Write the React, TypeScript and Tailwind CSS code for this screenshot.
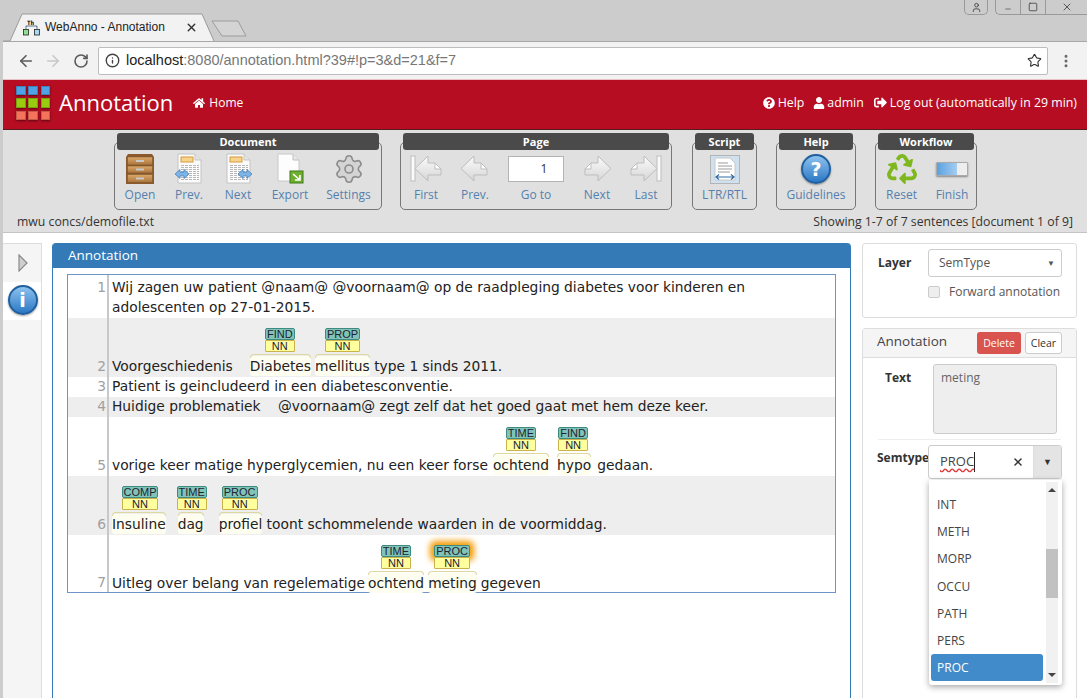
import { ArrowLeft, ArrowRight, RotateCw, Info, Star, EllipsisVertical, Settings, X, User, Minus, Square } from 'lucide-react'
import { FaHome, FaQuestionCircle, FaUser, FaSignOutAlt, FaRecycle } from 'react-icons/fa'

const annFont = { fontFamily: '"DejaVu Sans", sans-serif' }

function TabStrip() {
  return (
    <div className="relative h-[41px] bg-[#cccccc]">
      <svg className="absolute left-0 top-0" width="260" height="42" viewBox="0 0 260 42">
        <path d="M3 41 L10 41 L22 14 H202 L214 41" fill="#f2f2f2" stroke="#9a9a9a" />
        <path d="M212 21 L214 21 H238 L246 36 H222 Z" fill="#d4d4d4" stroke="#9c9c9c" strokeLinejoin="round" />
        <text x="27" y="25" fontSize="6" fontWeight="700" fontFamily="DejaVu Sans Mono">Th</text>
        <rect x="23.5" y="29.5" width="5" height="5.5" fill="#8fe08f" stroke="#222" strokeWidth="0.8" />
        <rect x="34.5" y="29.5" width="5" height="5.5" fill="#a8d8f0" stroke="#222" strokeWidth="0.8" />
        <path d="M26 29 V26 H37 V29" fill="none" stroke="#357" strokeWidth="0.8" />
      </svg>
      <span className="absolute left-[45px] top-[19px] text-[12px] leading-4 text-[#222]" style={{ fontFamily: '"Liberation Sans", sans-serif' }}>
        WebAnno - Annotation
      </span>
      <X className="absolute left-[185px] top-[21px] w-[13px] h-[13px] text-[#333]" strokeWidth={2.5} />
      <div className="absolute right-0 top-0 flex">
        <div className="w-[24px] h-[15px] border border-t-0 border-[#999] rounded-b-[5px] flex items-center justify-center mr-[7px]">
          <User className="w-[11px] h-[11px] text-[#444]" />
        </div>
        <div className="flex h-[15px] border border-t-0 border-r-0 border-[#999] rounded-bl-[5px]">
          <div className="w-[25px] border-r border-[#999] flex items-end justify-center pb-[1px]">
            <Minus className="w-[12px] h-[8px] text-[#444]" />
          </div>
          <div className="w-[25px] border-r border-[#999] flex items-center justify-center">
            <Square className="w-[10px] h-[10px] text-[#444]" />
          </div>
          <div className="w-[41px] flex items-center justify-center">
            <X className="w-[12px] h-[12px] text-[#555]" />
          </div>
        </div>
      </div>
    </div>
  )
}

function AddressBar() {
  return (
    <div className="flex items-center h-[38px] bg-[#f2f2f2] ml-[3px] border-t border-[#a8a8a8]">
      <ArrowLeft className="ml-[14px] w-[18px] h-[18px] text-[#5a5a5a]" strokeWidth={2.2} />
      <ArrowRight className="ml-[9px] w-[18px] h-[18px] text-[#c8c8c8]" strokeWidth={2.2} />
      <RotateCw className="ml-[11px] w-[16px] h-[16px] text-[#5a5a5a]" strokeWidth={2.4} />
      <div className="ml-[9px] w-[950px] h-[28px] bg-white border border-[#bdbdbd] rounded-[2px] flex items-center pl-[6px]">
        <Info className="w-[15px] h-[15px] text-[#444]" strokeWidth={2.2} />
        <span className="ml-[6px] text-[14.5px] text-[#222]" style={{ fontFamily: '"Liberation Sans", sans-serif' }}>
          localhost<span className="text-[#777]">:8080/annotation.html?39#!p=3&amp;d=21&amp;f=7</span>
        </span>
        <Star className="ml-auto mr-[5px] w-[15px] h-[15px] text-[#333]" strokeWidth={1.8} />
      </div>
      <EllipsisVertical className="ml-[10px] w-[16px] h-[16px] text-[#666]" strokeWidth={2.5} />
    </div>
  )
}

const logoColors = [
  'bg-[#4da3e6]', 'bg-[#4da3e6]', 'bg-[#4da3e6]',
  'bg-[#98cc10]', 'bg-[#98cc10]', 'bg-[#98cc10]',
  'bg-[#f4735a]', 'bg-[#f4735a]', 'bg-[#f4735a]',
]

function RedHeader() {
  return (
    <div className="flex items-center h-[51px] ml-[3px] bg-[#b60d23] border-t border-[#e8c0c6] border-b border-b-[#5a1a22] text-white" style={{ fontFamily: '"Open Sans", sans-serif' }}>
      <div className="ml-[13px] grid grid-cols-3 gap-[3px] w-[34px] mb-[3px]">
        {logoColors.map((c, i) => (
          <div key={i} className={`${c} w-[9.5px] h-[9.5px] border border-black/20 shadow-[0_1px_2px_rgba(0,0,0,0.5)]`} />
        ))}
      </div>
      <span className="ml-[9px] mb-[5px] text-[22px] leading-none">Annotation</span>
      <FaHome className="ml-[20px] mb-[4px] w-[12px] h-[12px]" />
      <span className="ml-[4px] mb-[4px] text-[12px]">Home</span>
      <div className="ml-auto mr-[10px] mb-[3px] flex items-center text-[12.33px]">
        <FaQuestionCircle className="w-[12px] h-[12px] mr-[3px]" />
        <span>Help</span>
        <FaUser className="ml-[9px] w-[12px] h-[12px] mr-[2px]" />
        <span>admin</span>
        <FaSignOutAlt className="ml-[10px] w-[13px] h-[13px] mr-[3px]" />
        <span>Log out (automatically in 29 min)</span>
      </div>
    </div>
  )
}

function Cabinet() {
  return (
    <svg width="30" height="32" viewBox="0 0 30 32">
      <defs>
        <linearGradient id="wood" x1="0" x2="0" y1="0" y2="1">
          <stop offset="0" stopColor="#dca86a" />
          <stop offset="1" stopColor="#a8743c" />
        </linearGradient>
      </defs>
      <path d="M3 1 H27 L29 4 V31 H1 V4 Z" fill="#8a5a2c" />
      <rect x="2.5" y="4" width="25" height="8" fill="url(#wood)" stroke="#7a5228" strokeWidth="0.5" />
      <rect x="2.5" y="13" width="25" height="7" fill="url(#wood)" stroke="#7a5228" strokeWidth="0.5" />
      <rect x="2.5" y="21.5" width="25" height="8" fill="url(#wood)" stroke="#7a5228" strokeWidth="0.5" />
      <rect x="11" y="7" width="8" height="2" fill="#c8c8c8" />
      <rect x="11" y="15.5" width="8" height="2" fill="#c8c8c8" />
      <rect x="11" y="24.5" width="8" height="2" fill="#c8c8c8" />
    </svg>
  )
}

function DocArrow({ dir }: { dir: 'left' | 'right' }) {
  const ax = dir === 'left' ? 1 : 15
  return (
    <svg width="30" height="32" viewBox="0 0 30 32">
      <path d="M4 1 H21 L27 7 V30 H4 Z" fill="#fbfbfb" stroke="#c4c4c4" />
      <path d="M21 1 V7 H27" fill="#e4e4e4" stroke="#c4c4c4" />
      <rect x="7" y="4" width="12" height="5" fill="#f6d48e" stroke="#d89a3c" />
      {[12, 14, 16, 18, 20, 22, 24, 26].map((y) => (
        <path key={y} d={`M7 ${y}.5 H25`} stroke="#b8b8b8" strokeWidth="1" strokeDasharray="3 1" />
      ))}
      <path
        d={`M${ax} 21 l5 -4.5 v2.5 h4 v-2.5 l5 4.5 l-5 4.5 v-2.5 h-4 v2.5 Z`}
        fill="#7db4e6"
        stroke="#3e78b4"
        strokeWidth="0.7"
      />
    </svg>
  )
}

function ExportDoc() {
  return (
    <svg width="30" height="32" viewBox="0 0 30 32">
      <path d="M3 1 H18 L24 7 V28 H3 Z" fill="#fdfdfd" stroke="#c8c8c8" />
      <path d="M18 1 V7 H24" fill="#e8e8e8" stroke="#c0c0c0" />
      <rect x="15" y="18" width="13" height="12" fill="#6fae2e" stroke="#3e7a18" />
      <path d="M18 21 L25 27 M25 22 V27 H20" fill="none" stroke="#fff" strokeWidth="1.6" />
    </svg>
  )
}

function PageArrow({ dir, bar }: { dir: 'left' | 'right'; bar?: boolean }) {
  return (
    <svg width="32" height="28" viewBox="0 0 32 28" className={dir === 'right' ? '-scale-x-100' : ''}>
      <defs>
        <linearGradient id="arrowfill" x1="0" x2="0" y1="0" y2="1">
          <stop offset="0" stopColor="#fbfbfb" />
          <stop offset="1" stopColor="#d6d6d6" />
        </linearGradient>
      </defs>
      {bar && <rect x="1" y="1" width="4" height="25" fill="#fafafa" stroke="#bdbdbd" />}
      <g transform={bar ? 'translate(4 0)' : 'translate(1 0)'}>
        <path d="M1 13.5 L14 1 V8 H21 L27 14 V20 H14 V26 Z" fill="url(#arrowfill)" stroke="#bdbdbd" strokeLinejoin="round" />
        <path d="M21 8 V14 H27 Z" fill="#fff" stroke="#bdbdbd" strokeLinejoin="round" />
      </g>
    </svg>
  )
}

function ScriptIcon() {
  return (
    <svg width="30" height="29" viewBox="0 0 30 29">
      <rect x="0.5" y="0.5" width="29" height="28" fill="#cfe0ee" stroke="#b4b4b4" />
      <path d="M5 3 H20 L25 8 V25 H5 Z" fill="#fff" stroke="#c8c8c8" />
      <path d="M8 8 H18 M8 11 H22 M8 14 H22 M8 17 H20" stroke="#9a9a9a" />
      <path d="M6 22 H24 M9 19.5 L6 22 L9 24.5 M21 19.5 L24 22 L21 24.5" fill="none" stroke="#2f6ca8" strokeWidth="1.2" />
    </svg>
  )
}

function BlueBadge({ glyph }: { glyph: string }) {
  return (
    <div
      className="w-[30px] h-[30px] rounded-full border-[2px] border-[#1f5f9e] bg-gradient-to-b from-[#8cc2ee] to-[#2a78c4] text-white text-[19px] font-bold leading-[26px] text-center shadow-[0_1px_2px_rgba(0,0,0,0.4)]"
      style={{ fontFamily: '"DejaVu Sans", sans-serif' }}
    >
      {glyph}
    </div>
  )
}

function Tool({ w, label, children }: { w: string; label: string; children: React.ReactNode }) {
  return (
    <div className={`${w} flex flex-col items-center shrink-0`}>
      <div className="h-[32px] flex items-center justify-center">{children}</div>
      <span className="mt-[2px] text-[12px] leading-[16px] text-[#5580ad]">{label}</span>
    </div>
  )
}

function Group({ title, w, children }: { title: string; w: string; children: React.ReactNode }) {
  return (
    <div className={`${w} flex flex-col shrink-0`}>
      <div className="relative z-10 mx-[3px] h-[17px] bg-[#4a4a4a] rounded-[3px] text-white text-[11px] font-bold leading-[17px] text-center">{title}</div>
      <div className="-mt-[8px] h-[68px] border border-[#777] rounded-[5px] flex pt-[10px]">{children}</div>
    </div>
  )
}

function Toolbar() {
  return (
    <div className="h-[103px] ml-[3px] bg-[#e0e0e0] border-b border-[#c4c4c4] pt-[3px] flex flex-col" style={{ fontFamily: '"Open Sans", sans-serif' }}>
      <div className="flex pl-[111px]">
        <Group title="Document" w="w-[268px]">
          <Tool w="w-[50px]" label="Open"><Cabinet /></Tool>
          <Tool w="w-[48px]" label="Prev."><DocArrow dir="left" /></Tool>
          <Tool w="w-[50px]" label="Next"><DocArrow dir="right" /></Tool>
          <Tool w="w-[54px]" label="Export"><ExportDoc /></Tool>
          <Tool w="w-[63px]" label="Settings">
            <Settings className="w-[32px] h-[32px] text-[#8c8c8c] fill-[#d4d4d4]" strokeWidth={1.2} />
          </Tool>
        </Group>
        <div className="ml-[18px]">
          <Group title="Page" w="w-[272px]">
            <Tool w="w-[50px]" label="First"><PageArrow dir="left" bar /></Tool>
            <Tool w="w-[48px]" label="Prev."><PageArrow dir="left" /></Tool>
            <Tool w="w-[74px]" label="Go to">
              <div className="w-[56px] h-[26px] bg-white border border-[#b4b4b4] pl-[16px] text-[12px] leading-[24px] text-[#333] text-center">1</div>
            </Tool>
            <Tool w="w-[48px]" label="Next"><PageArrow dir="right" /></Tool>
            <Tool w="w-[50px]" label="Last"><PageArrow dir="right" bar /></Tool>
          </Group>
        </div>
        <div className="ml-[20px]">
          <Group title="Script" w="w-[65px]">
            <Tool w="w-[63px]" label="LTR/RTL"><ScriptIcon /></Tool>
          </Group>
        </div>
        <div className="ml-[19px]">
          <Group title="Help" w="w-[80px]">
            <Tool w="w-[78px]" label="Guidelines"><BlueBadge glyph="?" /></Tool>
          </Group>
        </div>
        <div className="ml-[19px]">
          <Group title="Workflow" w="w-[102px]">
            <Tool w="w-[51px]" label="Reset"><FaRecycle className="w-[30px] h-[30px] text-[#7fb81e]" /></Tool>
            <Tool w="w-[50px]" label="Finish">
              <div className="w-[32px] h-[14px] bg-[#eee] border border-[#aaa] rounded-[1px] shadow-[0_1px_2px_rgba(0,0,0,0.4)]">
                <div className="w-[20px] h-full bg-gradient-to-r from-[#5aa0e0] to-[#a4cdf0]" />
              </div>
            </Tool>
          </Group>
        </div>
      </div>
      <div className="flex justify-between pl-[14px] pr-[14px] mt-[4px] text-[12.25px] leading-[16px] text-[#333]">
        <span>mwu concs/demofile.txt</span>
        <span>Showing 1-7 of 7 sentences [document 1 of 9]</span>
      </div>
    </div>
  )
}

function Label({ kind, place, glow }: { kind: string; place: string; glow?: boolean }) {
  return (
    <span className={`absolute bottom-[24px] ${place} flex flex-col`} style={{ fontFamily: '"Liberation Sans", sans-serif' }}>
      <span className={`relative h-[12px] border border-[#3f8a80] rounded-[2px] bg-[#7fc4b6] text-[11px] leading-[10px] text-center text-[#223] ${glow ? 'shadow-[0_0_6px_4px_#f59a00]' : ''}`}>{kind}</span>
      <span className="relative h-[12px] border border-[#c9b24a] rounded-[1px] bg-[#ffff9e] text-[11px] leading-[10px] text-center text-[#223]">NN</span>
    </span>
  )
}

function Ann({ word, kind, place, ml, glow }: { word: string; kind: string; place: string; ml: string; glow?: boolean }) {
  return (
    <span className={`relative inline-block ${ml} bg-[#fdfdf0] rounded-[3px]`}>
      <span className="absolute left-0 right-0 -top-[2px] h-[4px] border-t border-l border-r border-[#dcd8a0] rounded-t-[4px]" />
      <Label kind={kind} place={place} glow={glow} />
      {word}
    </span>
  )
}

function Row({ n, h, gray, top, low, children }: { n: number; h: string; gray?: boolean; top?: boolean; low?: boolean; children: React.ReactNode }) {
  return (
    <div className={`flex ${h} ${gray ? 'bg-[#eeeeee]' : 'bg-white'}`}>
      <div className={`w-[41px] shrink-0 border-r-[2px] border-[#c8c8c8] flex justify-end pr-[1px] text-[#a0a0a0] text-[13.8px] leading-[20px] ${top ? 'items-start pt-[2px]' : 'items-end'} ${low ? 'pb-0' : 'pb-[1px]'}`}>{n}</div>
      <div className={`flex-1 self-end pl-[3px] text-[#222] text-[13.8px] leading-[20px] whitespace-pre-wrap ${low ? '-mb-[1px]' : 'pb-[1px]'}`}>{children}</div>
    </div>
  )
}

function Sentences() {
  return (
    <div className="mx-[14px] mt-[6px] border border-[#6f94c8]" style={annFont}>
      <Row n={1} h="h-[43px]" top>
        Wij zagen uw patient @naam@ @voornaam@ op de raadpleging diabetes voor kinderen en adolescenten op 27-01-2015.
      </Row>
      <Row n={2} h="h-[59px]" gray>
        Voorgeschiedenis
        <Ann word="Diabetes" kind="FIND" place="left-[15px] w-[30px]" ml="ml-[17px]" />
        <Ann word="mellitus" kind="PROP" place="left-[10px] w-[35px]" ml="ml-[4px]" />
        {' type 1 sinds 2011.'}
      </Row>
      <Row n={3} h="h-[20px]">Patient is geincludeerd in een diabetesconventie.</Row>
      <Row n={4} h="h-[20px]" gray>Huidige problematiek{'    '}@voornaam@ zegt zelf dat het goed gaat met hem deze keer.</Row>
      <Row n={5} h="h-[59px]">
        vorige keer matige hyperglycemien, nu een keer forse
        <Ann word="ochtend" kind="TIME" place="left-[13px] w-[30px]" ml="ml-[5px]" />
        <Ann word="hypo" kind="FIND" place="left-[1px] w-[30px]" ml="ml-[8px]" />
        <span className="ml-[6px]">gedaan.</span>
      </Row>
      <Row n={6} h="h-[59px]" gray>
        <Ann word="Insuline" kind="COMP" place="left-[10px] w-[36px]" ml="ml-0" />
        <Ann word="dag" kind="TIME" place="-left-[1px] w-[30px]" ml="ml-[12px]" />
        <Ann word="profiel" kind="PROC" place="left-[3px] w-[36px]" ml="ml-[15px]" />
        {' toont schommelende waarden in de voormiddag.'}
      </Row>
      <Row n={7} h="h-[57px]" low>
        Uitleg over belang van regelematige
        <Ann word="ochtend" kind="TIME" place="left-[13px] w-[30px]" ml="ml-[3px]" />
        <Ann word="meting" kind="PROC" place="left-[6px] w-[36px]" ml="ml-[4px]" glow />
        <span className="ml-[4px]">gegeven</span>
      </Row>
    </div>
  )
}

const options = ['INT', 'METH', 'MORP', 'OCCU', 'PATH', 'PERS', 'PROC']

function RightColumn() {
  return (
    <div className="w-[215px] ml-[11px] shrink-0 flex flex-col gap-[10px] text-[12px] text-[#333]" style={{ fontFamily: '"Open Sans", sans-serif' }}>
      <div className="h-[75px] shrink-0 bg-white border border-[#ddd] rounded-[3px] pl-[15px] pt-[5px]">
        <div className="flex items-center">
          <span className="w-[50px] font-bold">Layer</span>
          <div className="w-[134px] h-[28px] border border-[#ccc] rounded-[3px] flex items-center justify-between pl-[10px] pr-[6px] text-[#555]">
            SemType
            <span className="text-[8px]">▼</span>
          </div>
        </div>
        <div className="flex items-center mt-[6px] ml-[50px]">
          <span className="w-[12px] h-[12px] shrink-0 bg-[#eee] border border-[#ccc] rounded-[2px]" />
          <span className="ml-[9px] text-[#555] whitespace-nowrap">Forward annotation</span>
        </div>
      </div>
      <div className="relative h-[400px] shrink-0 bg-white border border-[#ddd] rounded-t-[3px]">
        <div className="h-[29px] bg-[#f5f5f5] border-b border-[#ddd] flex items-center pl-[14px] pr-[14px]">
          <span className="mb-[3px] text-[13.5px] text-[#444]">Annotation</span>
          <span className="ml-auto w-[44px] h-[22px] bg-[#d9534f] rounded-[3px] text-white text-[10.5px] leading-[22px] text-center">Delete</span>
          <span className="ml-[4px] w-[37px] h-[22px] bg-white border border-[#ccc] rounded-[3px] text-[10.5px] leading-[20px] text-center">Clear</span>
        </div>
        <div className="flex pt-[6px] pl-[22px]">
          <span className="w-[48px] pt-[5px] font-bold">Text</span>
          <div className="w-[124px] h-[70px] bg-[#eeeeee] border border-[#ccc] rounded-[3px] px-[7px] text-[#666] leading-[25px]">meting</div>
        </div>
        <div className="mx-[15px] mt-[5px] border-t border-[#eee]" />
        <div className="flex pt-[5px] pl-[14px]">
          <span className="w-[51px] pt-[3px] font-bold leading-[20px]">Semtype</span>
          <div className="w-[134px] h-[34px] border border-[#ccc] rounded-[3px] flex overflow-hidden">
            <div className="flex-1 flex items-center pl-[11px] pr-[9px]">
              <span className="underline decoration-wavy decoration-[#d33] border-r border-[#222] text-[13px] text-[#444]">PROC</span>
              <X className="ml-auto w-[12px] h-[12px] text-[#333]" strokeWidth={3} />
            </div>
            <div className="w-[28px] bg-[#e4e4e4] border-l border-[#ddd] flex items-center justify-center text-[9px] text-[#333]">▼</div>
          </div>
        </div>
        <div className="absolute left-[66px] top-[151px] w-[133px] h-[205px] bg-white rounded-b-[3px] shadow-[0_2px_6px_rgba(0,0,0,0.35)] flex text-[12px] text-[#444]">
          <div className="flex-1 pl-[2px] pt-[11px]">
            {options.map((o) => (
              <div key={o} className={`w-[112px] h-[27.2px] pl-[6px] leading-[27px] rounded-[3px] ${o === 'PROC' ? 'bg-[#428bca] text-white' : ''}`}>{o}</div>
            ))}
          </div>
          <div className="relative w-[12px] mt-[2px] mb-[2px] mr-[4px] bg-[#f1f1f1]">
            <span className="absolute left-[2px] top-[6px] w-0 h-0 border-x-[4px] border-x-transparent border-b-[4px] border-b-[#444]" />
            <div className="absolute left-0 top-[67px] w-full h-[49px] bg-[#c1c1c1]" />
            <span className="absolute left-[2px] bottom-[6px] w-0 h-0 border-x-[4px] border-x-transparent border-t-[4px] border-t-[#444]" />
          </div>
        </div>
      </div>
    </div>
  )
}

function Main() {
  return (
    <div className="flex-1 flex ml-[3px] bg-white pt-[10px] overflow-hidden">
      <div className="w-[39px] shrink-0 bg-[#f5f5f5] border-t border-r border-[#ddd] flex flex-col">
        <div className="h-[38px] flex items-center justify-center pl-[2px]">
          <svg width="12" height="18" viewBox="0 0 12 18">
            <path d="M2 1 L10 9 L2 17 Z" fill="#cfcfcf" stroke="#8a8a8a" strokeWidth="1.2" />
          </svg>
        </div>
        <div className="h-[38px] bg-white flex justify-center pt-[3px] pl-[1px]">
          <BlueBadge glyph="i" />
        </div>
      </div>
      <div className="ml-[10px] w-[799px] shrink-0 border-l border-r border-[#337ab7] rounded-t-[4px]">
        <div className="h-[25px] bg-[#337ab7] text-white text-[13.5px] leading-[25px] pl-[15px] rounded-t-[3px]" style={{ fontFamily: '"Open Sans", sans-serif' }}>
          Annotation
        </div>
        <Sentences />
      </div>
      <RightColumn />
    </div>
  )
}

export default function App() {
  return (
    <div className="w-[1087px] h-[698px] overflow-hidden flex flex-col bg-[#cccccc]">
      <TabStrip />
      <AddressBar />
      <RedHeader />
      <Toolbar />
      <Main />
    </div>
  )
}
